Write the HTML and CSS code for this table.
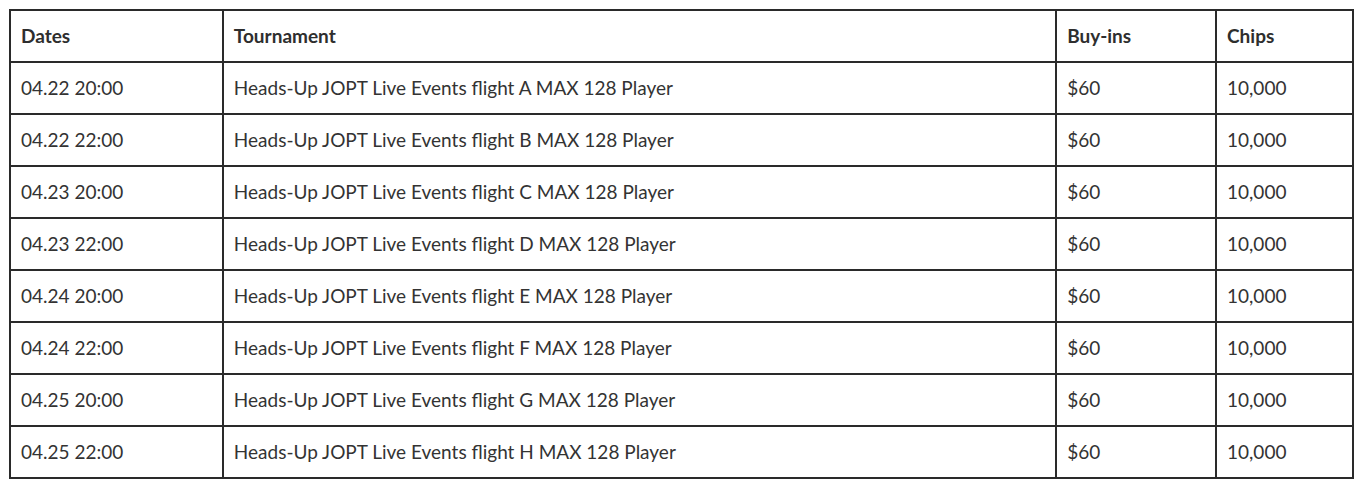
FILE: index.html
```html
<!DOCTYPE html>
<html>
<head>
<meta charset="utf-8">
<link rel="stylesheet" href="styles.css">
</head>
<body>
<div class="wrap">
<table class="schedule">
<colgroup>
<col class="c-date"><col class="c-name"><col class="c-buy"><col class="c-chips">
</colgroup>
<thead>
<tr><th>Dates</th><th>Tournament</th><th>Buy-ins</th><th>Chips</th></tr>
</thead>
<tbody>
<tr><td>04.22 20:00</td><td>Heads-Up JOPT Live Events flight A MAX 128 Player</td><td>$60</td><td>10,000</td></tr>
<tr><td>04.22 22:00</td><td>Heads-Up JOPT Live Events flight B MAX 128 Player</td><td>$60</td><td>10,000</td></tr>
<tr><td>04.23 20:00</td><td>Heads-Up JOPT Live Events flight C MAX 128 Player</td><td>$60</td><td>10,000</td></tr>
<tr><td>04.23 22:00</td><td>Heads-Up JOPT Live Events flight D MAX 128 Player</td><td>$60</td><td>10,000</td></tr>
<tr><td>04.24 20:00</td><td>Heads-Up JOPT Live Events flight E MAX 128 Player</td><td>$60</td><td>10,000</td></tr>
<tr><td>04.24 22:00</td><td>Heads-Up JOPT Live Events flight F MAX 128 Player</td><td>$60</td><td>10,000</td></tr>
<tr><td>04.25 20:00</td><td>Heads-Up JOPT Live Events flight G MAX 128 Player</td><td>$60</td><td>10,000</td></tr>
<tr><td>04.25 22:00</td><td>Heads-Up JOPT Live Events flight H MAX 128 Player</td><td>$60</td><td>10,000</td></tr>
</tbody>
</table>
</div>
</body>
</html>
```
FILE: styles.css
```css
html, body {
  margin: 0;
  padding: 0;
  background: #fff;
}
.wrap {
  padding: 9px 8px 0 9px;
}
.schedule {
  border-collapse: collapse;
  width: 1345px;
  font-family: Lato, "Liberation Sans", sans-serif;
  font-size: 19px;
  color: #333;
}
.c-date { width: 213px; }
.c-name { width: 834px; }
.c-buy { width: 160px; }
.c-chips { width: 137px; }
.schedule th,
.schedule td {
  border: 2px solid #2a2a2a;
  height: 52px;
  padding: 0 10px 2px;
  text-align: left;
  vertical-align: middle;
  box-sizing: border-box;
}
.schedule th {
  font-weight: 700;
  color: #2e2e2e;
}
.schedule td {
  font-weight: 400;
}
```
